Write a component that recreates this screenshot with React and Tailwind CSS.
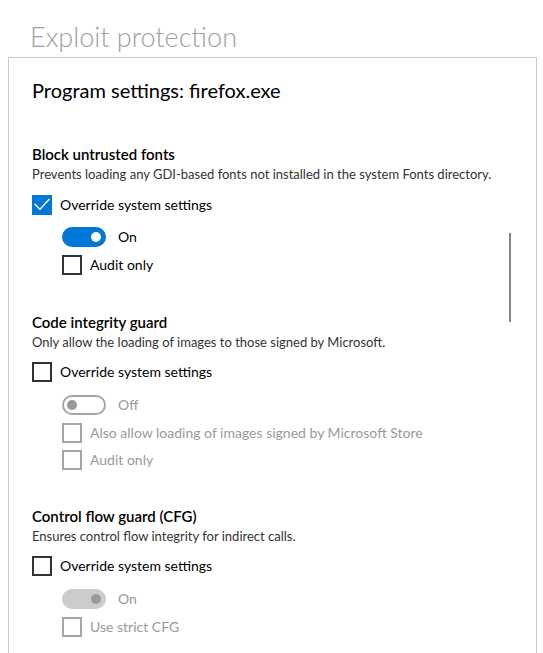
import React from 'react';

const BLUE = 'bg-[#0078d7]';

function Checkbox({ checked, disabled }) {
  if (checked) {
    return (
      <span className={`w-[20px] h-[20px] ${BLUE} flex items-center justify-center shrink-0`}>
        <svg width="20" height="20" viewBox="0 0 20 20">
          <path d="M2.5 8.8 L8 14.2 L17.4 4" fill="none" stroke="#fff" strokeWidth="1.4" />
        </svg>
      </span>
    );
  }
  return (
    <span
      className={`w-[20px] h-[20px] border-2 shrink-0 ${disabled ? 'border-[#a6a6a6]' : 'border-[#333]'}`}
    />
  );
}

function Toggle({ on, disabled }) {
  if (on && !disabled) {
    return (
      <span className={`w-[44px] h-[20px] rounded-full ${BLUE} flex items-center justify-end pr-[5px] shrink-0`}>
        <span className="w-[10px] h-[10px] rounded-full bg-white" />
      </span>
    );
  }
  if (on && disabled) {
    return (
      <span className="w-[44px] h-[20px] rounded-full bg-[#cccccc] flex items-center justify-end pr-[5px] shrink-0">
        <span className="w-[10px] h-[10px] rounded-full bg-[#999]" />
      </span>
    );
  }
  return (
    <span className="w-[44px] h-[20px] rounded-full border-2 border-[#a6a6a6] flex items-center pl-[3px] shrink-0">
      <span className="w-[10px] h-[10px] rounded-full bg-[#999]" />
    </span>
  );
}

function CheckRow({ label, checked, disabled, indent, mt }) {
  return (
    <div className={`flex items-center h-[20px] gap-[8px] ${indent ? 'pl-[30px]' : ''} ${mt}`}>
      <Checkbox checked={checked} disabled={disabled} />
      <span className={`text-[14px] leading-[20px] ${disabled ? 'text-[#9a9a9a]' : 'text-black'}`}>{label}</span>
    </div>
  );
}

function ToggleRow({ on, disabled, mt }) {
  return (
    <div className={`flex items-center h-[20px] gap-[12px] pl-[30px] ${mt}`}>
      <Toggle on={on} disabled={disabled} />
      <span className={`text-[14px] leading-[20px] ${disabled ? 'text-[#9a9a9a]' : 'text-black'}`}>{on ? 'On' : 'Off'}</span>
    </div>
  );
}

function SectionHead({ title, desc, mt }) {
  return (
    <div className={mt}>
      <div className="text-[15px] leading-[20px] font-semibold text-black">{title}</div>
      <div className="text-[13px] leading-[16px] text-[#333] mt-[2px]">{desc}</div>
    </div>
  );
}

export default function App() {
  return (
    <div className="w-[543px] h-[653px] overflow-hidden bg-white font-['Segoe_UI','Lato',sans-serif]">
      <h1 className="pl-[30px] pt-[16px] text-[27px] leading-[41px] font-light text-[#a0a0a0]">Exploit protection</h1>
      <div className="relative ml-[8px] mr-[6px] border border-b-0 border-[#cccccc] h-[600px] pl-[23px] pt-[18px]">
        <div className="absolute right-[25px] top-[175px] w-[2px] h-[89px] bg-[#858585]" />

        <div className="text-[20px] leading-[28px] text-black">Program settings: firefox.exe</div>

        <SectionHead
          mt="mt-[40px]"
          title="Block untrusted fonts"
          desc="Prevents loading any GDI-based fonts not installed in the system Fonts directory."
        />
        <CheckRow mt="mt-[13px]" checked label="Override system settings" />
        <ToggleRow mt="mt-[12px]" on />
        <CheckRow mt="mt-[8px]" indent label="Audit only" />

        <SectionHead
          mt="mt-[37px]"
          title="Code integrity guard"
          desc="Only allow the loading of images to those signed by Microsoft."
        />
        <CheckRow mt="mt-[12px]" label="Override system settings" />
        <ToggleRow mt="mt-[13px]" disabled />
        <CheckRow mt="mt-[8px]" indent disabled label="Also allow loading of images signed by Microsoft Store" />
        <CheckRow mt="mt-[7px]" indent disabled label="Audit only" />

        <SectionHead
          mt="mt-[36px]"
          title="Control flow guard (CFG)"
          desc="Ensures control flow integrity for indirect calls."
        />
        <CheckRow mt="mt-[12px]" label="Override system settings" />
        <ToggleRow mt="mt-[13px]" on disabled />
        <CheckRow mt="mt-[8px]" indent disabled label="Use strict CFG" />
      </div>
    </div>
  );
}
